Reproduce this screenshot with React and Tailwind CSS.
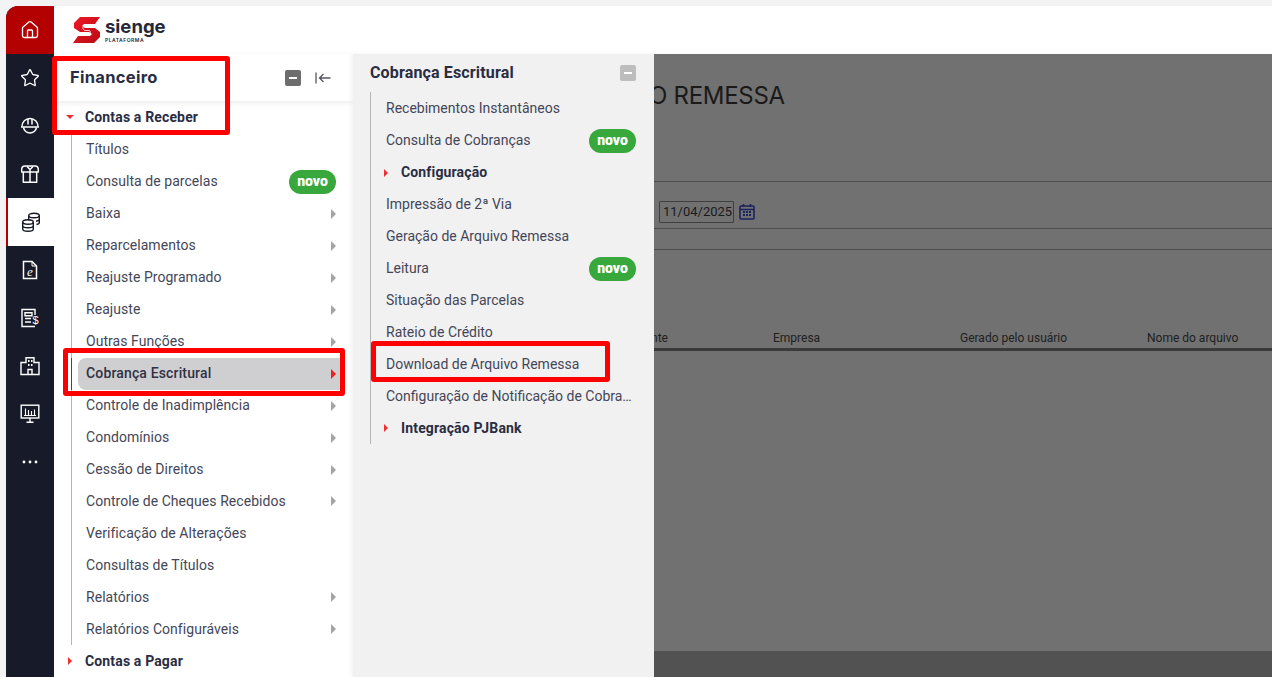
import React from 'react';
import { House, Star } from 'lucide-react';

const mainItems = [
  { label: 'Títulos' },
  { label: 'Consulta de parcelas', badge: true },
  { label: 'Baixa', arrow: true },
  { label: 'Reparcelamentos', arrow: true },
  { label: 'Reajuste Programado', arrow: true },
  { label: 'Reajuste', arrow: true },
  { label: 'Outras Funções', arrow: true },
  { label: 'Cobrança Escritural', arrow: true, active: true },
  { label: 'Controle de Inadimplência', arrow: true },
  { label: 'Condomínios', arrow: true },
  { label: 'Cessão de Direitos', arrow: true },
  { label: 'Controle de Cheques Recebidos', arrow: true },
  { label: 'Verificação de Alterações' },
  { label: 'Consultas de Títulos' },
  { label: 'Relatórios', arrow: true },
  { label: 'Relatórios Configuráveis', arrow: true },
];

const subItems = [
  { label: 'Recebimentos Instantâneos' },
  { label: 'Consulta de Cobranças', badge: true },
  { label: 'Configuração', group: true },
  { label: 'Impressão de 2ª Via' },
  { label: 'Geração de Arquivo Remessa' },
  { label: 'Leitura', badge: true },
  { label: 'Situação das Parcelas' },
  { label: 'Rateio de Crédito' },
  { label: 'Download de Arquivo Remessa' },
  { label: 'Configuração de Notificação de Cobrança' },
  { label: 'Integração PJBank', group: true },
];

const Helmet = () => (
  <svg width="20" height="20" viewBox="0 0 20 20" fill="none" stroke="currentColor" strokeWidth="1.5">
    <path d="M2 10.5a8 8 0 0 1 16 0" />
    <path d="M8 3v5.5M12 3v5.5" />
    <path d="M1 11h18" />
    <path d="M3.5 11.5a6.6 6.6 0 0 0 13 0" />
  </svg>
);

const Box3d = () => (
  <svg width="20" height="20" viewBox="0 0 20 20" fill="none" stroke="currentColor" strokeWidth="1.5" strokeLinejoin="round">
    <path d="M5 2h10c2 0 3.300 1.500 3.300 3.500V8H1.700V5.500C1.700 3.500 3 2 5 2z" />
    <path d="M3.300 8v10.300h13.400V8" />
    <path d="M7 2.500l3 3 3-3M10 5.500v12.800" />
  </svg>
);

const CoinStack = () => (
  <svg width="20" height="20" viewBox="0 0 20 20" fill="none" stroke="currentColor" strokeWidth="1.4">
    <ellipse cx="13" cy="3.500" rx="5.300" ry="2.200" />
    <path d="M7.700 3.500v5M18.300 3.500v7c0 1-1.100 1.700-2.800 2M18.300 7c0 1.100-1.300 2-3.300 2.200" />
    <ellipse cx="7" cy="10" rx="5.300" ry="2.200" />
    <path d="M1.700 10v7c0 1.300 2.400 2.300 5.300 2.300s5.300-1 5.300-2.300v-7M1.700 13.500c0 1.300 2.400 2.300 5.300 2.300s5.300-1 5.300-2.300" />
  </svg>
);

const EDoc = () => (
  <svg width="20" height="20" viewBox="0 0 20 20" fill="none" stroke="currentColor" strokeWidth="1.5">
    <path d="M3.500 1.500h8.500l4.500 4.500v12.500H3.500z" />
    <path d="M12 1.500V6h4.500" strokeWidth="1" />
    <text x="10" y="15.500" textAnchor="middle" fontSize="13" fontStyle="italic" fill="currentColor" stroke="none" fontFamily="Liberation Serif, serif">e</text>
  </svg>
);

const ReceiptDollar = () => (
  <svg width="20" height="20" viewBox="0 0 20 20" fill="none" stroke="currentColor" strokeWidth="1.4">
    <path d="M15 7V1.500H2v17h13" />
    <path d="M5 4.700h7v3H5zM5 10.500h6M5 14h6" />
    <text x="15.500" y="15.500" textAnchor="middle" fontSize="11" fill="currentColor" stroke="none" fontFamily="Liberation Sans, sans-serif">$</text>
  </svg>
);

const BuildingIcon = () => (
  <svg width="20" height="20" viewBox="0 0 20 20" fill="none" stroke="currentColor" strokeWidth="1.4">
    <path d="M6 6.500V1.700h8v4.800h5v12H1v-12z" />
    <path d="M8 18.500v-5h4v5" />
    <path d="M8 5h1.500M11 5h1.500M8 9h1.500M11 9h1.500" strokeWidth="1.800" />
  </svg>
);

const MonitorChart = () => (
  <svg width="20" height="20" viewBox="0 0 20 20" fill="none" stroke="currentColor" strokeWidth="1.4">
    <rect x="1.200" y="1.200" width="17.600" height="12.800" />
    <path d="M4 11.500h12M5.500 11.500V4.500M8.500 11.500V6M11.500 11.500V7M14.500 11.500V5.500" strokeWidth="1.100" />
    <path d="M10 14v4M6.500 18.300h7" />
  </svg>
);

const Dots = () => (
  <svg width="20" height="20" viewBox="0 0 20 20" fill="currentColor">
    <circle cx="4" cy="10" r="1.400" />
    <circle cx="10" cy="10" r="1.400" />
    <circle cx="16" cy="10" r="1.400" />
  </svg>
);

const railItems = [
  { icon: <House size={20} strokeWidth={1.6} />, kind: 'home' },
  { icon: <Star size={20} strokeWidth={1.6} /> },
  { icon: <Helmet /> },
  { icon: <Box3d /> },
  { icon: <CoinStack />, kind: 'active' },
  { icon: <EDoc /> },
  { icon: <ReceiptDollar /> },
  { icon: <BuildingIcon /> },
  { icon: <MonitorChart /> },
  { icon: <Dots /> },
];

const Rail = () => (
  <div className="w-12 shrink-0 bg-[#171b29] text-white flex flex-col rounded-tl-xl overflow-hidden">
    {railItems.map((item, i) => (
      <div
        key={i}
        className={
          'h-12 shrink-0 flex items-center justify-center ' +
          (item.kind === 'home' ? 'bg-[#b30000] ' : '') +
          (item.kind === 'active' ? 'bg-white text-[#171b29] border-l-2 border-[#b30000] ' : '')
        }
      >
        {item.icon}
      </div>
    ))}
  </div>
);

const Badge = () => (
  <span className="w-[47px] h-6 rounded-full bg-[#38a83c] text-white text-[14px] font-black tracking-normal flex items-center justify-center shrink-0">
    novo
  </span>
);

const ArrowRight = ({ active }) => (
  <span
    className={
      'w-0 h-0 border-y-[5px] border-y-transparent border-l-[5px] shrink-0 ' +
      (active ? 'border-l-[#f02020]' : 'border-l-[#a2a2a8]')
    }
  />
);

const GroupArrow = () => (
  <span className="w-0 h-0 border-y-[4px] border-y-transparent border-l-[4px] border-l-[#f03030] shrink-0" />
);

const MinusBox = ({ light }) => (
  <span className={'w-4 h-4 rounded-[2px] flex items-center justify-center shrink-0 ' + (light ? 'bg-[#bdbdbd]' : 'bg-[#6d6d6d]')}>
    <span className="w-2 h-0.5 bg-white" />
  </span>
);

const MainMenu = () => (
  <div className="w-[299px] shrink-0 bg-white flex flex-col z-10 font-['Roboto',sans-serif]">
    <div className="h-[47px] shrink-0 flex items-center pl-[16px] pr-[22px] shadow-[0_2px_6px_rgba(0,0,0,0.08)]">
      <span className="flex-1 text-[16.5px] font-bold text-[#2a2d42] tracking-[0.3px] font-['Inter',sans-serif]">Financeiro</span>
      <MinusBox />
      <svg className="ml-[14px] text-[#55555f]" width="16" height="14" viewBox="0 0 16 14" fill="none" stroke="currentColor" strokeWidth="1.3">
        <path d="M1 1.500v11M15.500 7H4.500M8.500 3l-4 4 4 4" />
      </svg>
    </div>
    <div className="h-[32px] shrink-0 flex items-center pl-[12px] font-bold text-[#2a2d42] tracking-[0.15px]">
      <span className="w-0 h-0 border-x-[4px] border-x-transparent border-t-[4px] border-t-[#f03030] mr-[11px]" />
      Contas a Receber
    </div>
    <div className="ml-[17px] mt-[1px] border-l border-[#b5b5b8]">
      {mainItems.map((item) => (
        <div
          key={item.label}
          className={
            'h-[31.96px] flex items-center pr-[17px] ' +
            (item.active ? '-ml-px border-l border-[#f00000] pl-[6px]' : 'pl-[6px]')
          }
        >
          <div
            className={
              'flex-1 h-full flex items-center pl-[8px] tracking-[0.05px] ' +
              (item.active ? 'bg-[#cfcfd1] rounded-l-lg font-medium text-[#2f3144] tracking-[0.15px] -mr-[8px] pr-[8px]' : 'text-[#444658]')
            }
          >
            <span className="flex-1">{item.label}</span>
            {item.badge && <Badge />}
            {item.arrow && <ArrowRight active={item.active} />}
          </div>
        </div>
      ))}
    </div>
    <div className="h-[32px] shrink-0 flex items-center pl-[14px] font-bold text-[#2a2d42] tracking-[0.15px]">
      <GroupArrow />
      <span className="ml-[13px]">Contas a Pagar</span>
    </div>
  </div>
);

const SubMenu = () => (
  <div className="w-[301px] shrink-0 bg-[#f1f1f1] flex flex-col z-10 pl-[17px] pr-[18px] font-['Roboto',sans-serif] shadow-[-2px_0_4px_rgba(0,0,0,0.05)]">
    <div className="h-[38px] shrink-0 flex items-center pb-[1px]">
      <span className="flex-1 text-[16px] font-bold text-[#2a2d42] tracking-[0.15px]">Cobrança Escritural</span>
      <MinusBox light />
    </div>
    <div className="border-l border-[#b5b5b8] pt-[1px]">
      {subItems.map((item) =>
        item.group ? (
          <div key={item.label} className="h-[31.93px] flex items-center pl-[13px] font-bold text-[#2a2d42] tracking-[0.15px]">
            <GroupArrow />
            <span className="ml-[13px]">{item.label}</span>
          </div>
        ) : (
          <div key={item.label} className="h-[31.93px] flex items-center pl-[15px] text-[#444658]">
            <span className="flex-1 truncate">{item.label}</span>
            {item.badge && <Badge />}
          </div>
        )
      )}
    </div>
  </div>
);

const Backdrop = () => (
  <div className="flex-1 min-w-0 bg-[#717171] flex flex-col font-['Roboto',sans-serif] text-[#1a1a1a] -ml-[4px]">
    <div className="h-[83px] shrink-0 flex items-center text-[24px] font-['Inter',sans-serif] tracking-[-0.3px] -ml-[1px]">O REMESSA</div>
    <div className="h-[44px] shrink-0" />
    <div className="h-[48px] shrink-0 border-y border-[#4d4d4d] flex items-end pl-[9px] gap-[4px] pb-[5px]">
      <span className="w-[75px] h-[22px] border border-[#3f3f3f] text-[13px] flex items-center pl-[3px] rounded-[1px]">11/04/2025</span>
      <svg width="18" height="18" viewBox="0 0 18 18" className="text-[#1c2260] mb-[2px]" fill="none" stroke="currentColor" strokeWidth="1.600">
        <rect x="2" y="3" width="14" height="13" rx="1" />
        <path d="M2 6.500h14M5.500 1v3M12.500 1v3" />
        <path d="M5 9h2M8 9h2M11 9h2M5 12h2M8 12h2M11 12h2" strokeWidth="2" />
      </svg>
    </div>
    <div className="h-[21px] shrink-0 border-b border-[#4d4d4d]" />
    <div className="h-[78px] shrink-0" />
    <div className="h-[20px] shrink-0 border-b-[3px] border-[#3a3a3a] box-content flex items-center text-[12px] text-[#202020] mb-[1px]">
      <span className="w-[123px] pl-[1px]">nte</span>
      <span className="w-[187px]">Empresa</span>
      <span className="w-[187px]">Gerado pelo usuário</span>
      <span>Nome do arquivo</span>
    </div>
    <div className="flex-1" />
    <div className="h-[26px] shrink-0 bg-[#525252]" />
  </div>
);

// annotation boxes drawn over the screenshot
const Annotation = ({ className }) => (
  <div className={'absolute border-[5px] border-[#ff0000] rounded-[3px] z-20 pointer-events-none ' + className} />
);

export default function App() {
  return (
    <div className="relative w-[1272px] h-[677px] overflow-hidden bg-[#f3f3f3] pl-[6px] pt-[6px] flex font-['Inter',sans-serif] text-[14px]">
      <Rail />
      <div className="flex-1 min-w-0 flex flex-col">
        <div className="h-12 shrink-0 bg-white flex items-center pl-[19px] gap-[6px]">
          <svg width="27" height="28" viewBox="0 0 27 28">
            <defs>
              <linearGradient id="logoRed" x1="0" y1="0" x2="1" y2="1">
                <stop offset="0" stopColor="#f01824" />
                <stop offset="1" stopColor="#b80c14" />
              </linearGradient>
            </defs>
            <path d="M7 1h20l-5 7H11L9 10l3 2h10l5 4v5l-6 6H0l5-7h12l2-2-3-2H7L1 12V7z" fill="url(#logoRed)" />
            <path d="M17 10.500h-6l-1.500 1.500 2 2.500h5l1 1.500-1 1.500h-6" stroke="#fff" strokeWidth="0.800" fill="none" />
          </svg>
          <div className="flex flex-col leading-none text-[#25273a] -ml-[1px]">
            <span className="text-[18.500px] font-bold leading-[19px]">sienge</span>
            <span className="text-[5px] font-semibold tracking-[0.5px] mt-[2px]">PLATAFORMA</span>
          </div>
        </div>
        <div className="flex-1 min-h-0 flex">
          <MainMenu />
          <SubMenu />
          <Backdrop />
        </div>
      </div>
      <Annotation className="left-[52px] top-[56px] w-[178px] h-[79px]" />
      <Annotation className="left-[63px] top-[348px] w-[282px] h-[48px]" />
      <Annotation className="left-[371px] top-[341px] w-[239px] h-[41px]" />
    </div>
  );
}
